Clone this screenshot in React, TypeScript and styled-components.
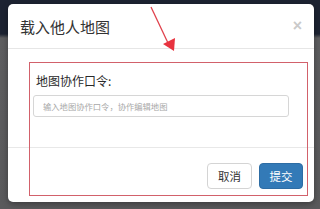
import styled, { createGlobalStyle } from 'styled-components';

const GlobalStyle = createGlobalStyle`
  html, body {
    margin: 0;
    padding: 0;
  }
  body {
    font-family: "Noto Sans", "Noto Sans CJK SC", sans-serif;
    color: #333;
  }
`;

const Backdrop = styled.div`
  width: 320px;
  height: 209px;
  box-sizing: border-box;
  padding: 4px 6px 7px 8px;
  background: linear-gradient(to bottom, #1d2332 0, #1d2332 34px, #5e5e60 38px, #5a5a5c 100%);
  position: relative;
  overflow: hidden;
`;

const Modal = styled.div`
  width: 306px;
  height: 198px;
  background: #fff;
  border-radius: 5px;
  box-shadow: 0 2px 6px rgba(0, 0, 0, 0.35);
  display: flex;
  flex-direction: column;
`;

const Header = styled.div`
  height: 45px;
  box-sizing: border-box;
  padding: 0 12px;
  border-bottom: 1px solid #e6e6e6;
  display: flex;
  align-items: center;
  justify-content: space-between;
`;

const Title = styled.h4`
  margin: 0;
  font-family: "Noto Sans CJK SC", sans-serif;
  font-size: 15px;
  font-weight: 400;
  color: #333;
  line-height: 18px;
  padding-top: 2px;
`;

const Close = styled.span`
  font-family: "Liberation Sans", Arial, sans-serif;
  font-size: 16px;
  font-weight: 700;
  color: #cacaca;
  line-height: 1;
  padding-bottom: 1px;
`;

const Body = styled.div`
  height: 99px;
  box-sizing: border-box;
  padding: 24px 25px 0 25px;
  border-bottom: 1px solid #e8e8e8;
`;

const Label = styled.label`
  display: block;
  font-family: "Noto Sans CJK SC", sans-serif;
  font-size: 12px;
  font-weight: 400;
  line-height: 16px;
  color: #2a2a2a;
  margin: 0 0 6px 3px;
`;

const Input = styled.input`
  display: block;
  width: 256px;
  height: 22px;
  box-sizing: border-box;
  border: 1px solid #d6d6d6;
  border-radius: 3px;
  padding: 0 9px;
  font-family: "Noto Sans CJK SC", sans-serif;
  font-size: 8.3px;
  outline: none;
  &::placeholder {
    color: #a8a8a8;
  }
`;

const Footer = styled.div`
  flex: 1;
  display: flex;
  align-items: center;
  justify-content: flex-end;
  gap: 7px;
  padding: 0 11px 0 0;
`;

const Button = styled.button<{ $primary?: boolean }>`
  height: 26px;
  width: ${(p) => (p.$primary ? 44 : 45)}px;
  box-sizing: border-box;
  border-radius: 4px;
  border: 1px solid ${(p) => (p.$primary ? '#2e6da4' : '#d4d4d4')};
  background: ${(p) => (p.$primary ? '#337ab7' : '#fff')};
  color: ${(p) => (p.$primary ? '#fff' : '#333')};
  font-family: "Noto Sans CJK SC", sans-serif;
  font-size: 11.5px;
  padding: 0;
  margin-top: 1px;
`;

const Highlight = styled.div`
  position: absolute;
  left: 29px;
  top: 62px;
  width: 279px;
  height: 134px;
  box-sizing: border-box;
  border: 1.5px solid #d2616b;
  pointer-events: none;
`;

const Arrow = styled.svg`
  position: absolute;
  left: 0;
  top: 0;
  pointer-events: none;
`;

export default function App() {
  return (
    <>
      <GlobalStyle />
      <Backdrop>
        <Modal>
          <Header>
            <Title>载入他人地图</Title>
            <Close>×</Close>
          </Header>
          <Body>
            <Label>地图协作口令:</Label>
            <Input placeholder="输入地图协作口令，协作编辑地图" />
          </Body>
          <Footer>
            <Button>取消</Button>
            <Button $primary>提交</Button>
          </Footer>
        </Modal>
        <Highlight />
        <Arrow width="320" height="209" viewBox="0 0 320 209">
          <line x1="151" y1="7" x2="168" y2="43" stroke="#e0424c" strokeWidth="1.3" />
          <polygon points="174,51 163,44 175,38" fill="#e8333f" />
        </Arrow>
      </Backdrop>
    </>
  );
}
